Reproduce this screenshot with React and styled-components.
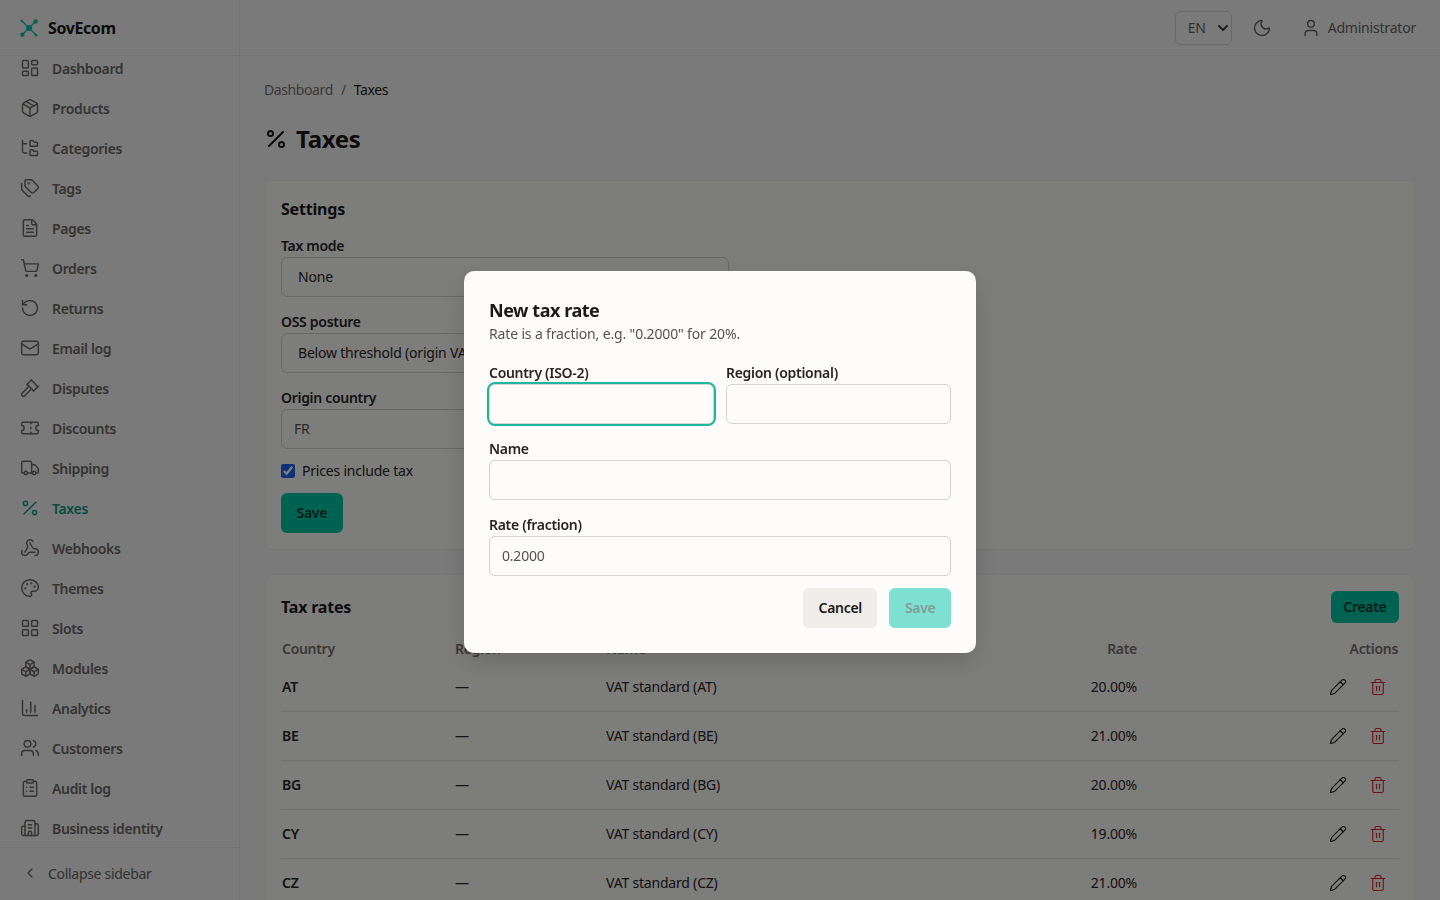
import styled, { createGlobalStyle } from "styled-components";
import {
  LayoutDashboard, Package, FolderTree, Tags, FileText, ShoppingCart, RotateCcw, Mail, Gavel,
  Ticket, Truck, Percent, Webhook, Palette, LayoutGrid, Boxes, ChartColumn, Users, ClipboardList,
  Building2, ChevronLeft, ChevronDown, Moon, User, Pencil, Trash2,
} from "lucide-react";

const GlobalStyle = createGlobalStyle`
  html, body { margin: 0; height: 100%; overflow: hidden; }
  body {
    background: #f5f5f4;
    color: #1c1917;
    font-family: "Noto Sans", "Liberation Sans", sans-serif;
    font-size: 14px;
    letter-spacing: -0.2px;
  }
  * { box-sizing: border-box; }
`;

const Shell = styled.div`
  display: flex;
  height: 900px;
  overflow: hidden;
`;

const Sidebar = styled.aside`
  width: 240px;
  flex-shrink: 0;
  display: flex;
  flex-direction: column;
  background: #f5f5f4;
  border-right: 1px solid #ebe9e7;
`;

const Brand = styled.div`
  height: 56px;
  flex-shrink: 0;
  display: flex;
  align-items: center;
  gap: 9px;
  padding: 0 19px;
  border-bottom: 1px solid #e7e5e4;
  font-size: 16px;
  font-weight: 700;
  letter-spacing: -0.4px;
  color: #1c1917;
`;

const Nav = styled.nav`
  flex: 1;
  overflow: hidden;
`;

const NavList = styled.div`
  margin-top: -8px;
`;

const NavItem = styled.a`
  height: 40px;
  display: flex;
  align-items: center;
  gap: 12px;
  padding: 0 20px;
  font-weight: 600;
  letter-spacing: -0.35px;
  color: ${(p) => (p.$active ? "#0d9c80" : "#6b6866")};
`;

const Collapse = styled.div`
  height: 53px;
  flex-shrink: 0;
  display: flex;
  align-items: center;
  gap: 10px;
  padding: 0 22px 2px;
  border-top: 1px solid #e7e5e4;
  color: #676462;
  letter-spacing: -0.3px;
`;

const Content = styled.div`
  flex: 1;
  min-width: 0;
  display: flex;
  flex-direction: column;
`;

const Topbar = styled.header`
  height: 56px;
  flex-shrink: 0;
  display: flex;
  align-items: center;
  justify-content: flex-end;
  padding: 0 24px;
  border-bottom: 1px solid #e7e5e4;
`;

const LangWrap = styled.div`
  position: relative;
  margin-right: 20px;
  svg { position: absolute; right: 1px; top: 9px; pointer-events: none; color: #44403c; }
`;

const LangSelect = styled.select`
  appearance: none;
  width: 57px;
  height: 34px;
  padding: 0 0 0 12px;
  border: 1px solid #d6d3d1;
  border-radius: 6px;
  background: #f5f5f4;
  color: #676462;
  font: inherit;
  letter-spacing: inherit;
`;

const ThemeToggle = styled.button`
  width: 20px;
  height: 20px;
  padding: 0;
  margin-right: 29px;
  border: 0;
  background: none;
  color: #676462;
`;

const UserBox = styled.div`
  display: flex;
  align-items: center;
  gap: 7px;
  color: #676462;
`;

const Main = styled.main`
  flex: 1;
  overflow: hidden;
  padding: 24px 25px 0 24px;
`;

const Breadcrumb = styled.div`
  display: flex;
  gap: 8px;
  height: 20px;
  line-height: 20px;
  letter-spacing: -0.4px;
  color: #78716c;
  span:last-child { color: #1c1917; }
`;

const Title = styled.h1`
  display: flex;
  align-items: center;
  gap: 8px;
  margin: 19px 0 23px;
  height: 38px;
  font-size: 24px;
  font-weight: 700;
  letter-spacing: -0.3px;
  svg { margin-top: 2px; }
`;

const Card = styled.section`
  margin: 0 0 24px 1px;
  padding: 16px 15px;
  background: #fafaf9;
  border: 1px solid #eeedeb;
  border-radius: 6px;
`;

const CardTitle = styled.h2`
  margin: 0;
  font-size: 16px;
  line-height: 24px;
  font-weight: 700;
`;

const Stack = styled.div`
  width: 448px;
  margin-top: 15px;
  display: flex;
  flex-direction: column;
  gap: 15px;
`;

const Field = styled.label`
  display: flex;
  flex-direction: column;
  min-width: 0;
  flex: 1;
`;

const Label = styled.span`
  height: 20px;
  line-height: 20px;
  margin-bottom: 1px;
  font-weight: 600;
  letter-spacing: -0.3px;
  color: #292524;
`;

const Select = styled.select`
  appearance: none;
  height: 40px;
  padding: 0 16px 2px;
  border: 1px solid #d6d3d1;
  border-radius: 6px;
  background: #fafaf9;
  color: #292524;
  font: inherit;
  letter-spacing: inherit;
`;

const Input = styled.input`
  width: 100%;
  height: 40px;
  padding: 0 12px 2px;
  border: 1px solid #d6d3d1;
  border-radius: 6px;
  background: ${(p) => p.$bg || "#fafaf9"};
  color: #57534e;
  font: inherit;
  letter-spacing: inherit;
  ${(p) => p.$focused && "outline: 2px solid #1fb5a0; outline-offset: 0;"}
`;

const CheckRow = styled.label`
  display: flex;
  align-items: center;
  gap: 7px;
  margin-top: -3px;
  height: 20px;
  padding-bottom: 1px;
  color: #292524;
`;

const Check = styled.input`
  width: 14px;
  height: 14px;
  margin: 0;
  accent-color: #2563eb;
`;

const Button = styled.button`
  height: ${(p) => (p.$small ? "32px" : "40px")};
  padding: 0 ${(p) => (p.$small ? "12.5px" : "15.5px")} 2px;
  border: 0;
  border-radius: 6px;
  background: ${(p) => (p.$secondary ? "#efedea" : "#01c4a2")};
  color: ${(p) => (p.$secondary ? "#1c1917" : "#083c36")};
  font: inherit;
  font-weight: 600;
  letter-spacing: -0.3px;
  opacity: ${(p) => (p.$disabled ? 0.5 : 1)};
`;

const FormSave = styled(Button)`
  align-self: flex-start;
  margin-top: -3px;
`;

const TableHead = styled.div`
  display: flex;
  align-items: center;
  justify-content: space-between;
  height: 32px;
`;

const Table = styled.table`
  width: 100%;
  margin-top: 11px;
  border-collapse: collapse;
  table-layout: fixed;
`;

const Th = styled.th`
  height: 28px;
  padding: 0 1px;
  text-align: ${(p) => p.$align || "left"};
  font-weight: 600;
  letter-spacing: -0.3px;
  color: #78716c;
`;

const Td = styled.td`
  height: 49px;
  padding: 0 1px;
  border-bottom: 1px solid #e7e5e4;
  text-align: ${(p) => p.$align || "left"};
  font-weight: ${(p) => (p.$strong ? 600 : 400)};
  color: #292524;
`;

const Actions = styled.div`
  display: flex;
  align-items: center;
  justify-content: flex-end;
  gap: 22px;
  padding: 1px 11px 0 0;
`;

const IconBtn = styled.button`
  display: flex;
  width: 18px;
  height: 18px;
  padding: 0;
  border: 0;
  background: none;
  color: ${(p) => (p.$danger ? "#dc2626" : "#1c1917")};
`;

const Overlay = styled.div`
  position: fixed;
  inset: 0;
  display: flex;
  justify-content: center;
  align-items: flex-start;
  padding-top: 271px;
  background: rgba(0, 0, 0, 0.5);
`;

const Dialog = styled.div`
  width: 512px;
  padding: 25px;
  background: #fdfcfb;
  border-radius: 10px;
  box-shadow: 0 10px 25px rgba(0, 0, 0, 0.15);
`;

const DialogTitle = styled.h3`
  margin: 0;
  font-size: 18px;
  line-height: 28px;
  font-weight: 700;
  letter-spacing: -0.45px;
  color: #1c1917;
`;

const DialogText = styled.p`
  margin: 0 0 19px;
  height: 20px;
  line-height: 20px;
  letter-spacing: -0.15px;
  color: #57534e;
`;

const DialogForm = styled.div`
  display: flex;
  flex-direction: column;
  gap: 15px;
`;

const FieldRow = styled.div`
  display: flex;
  gap: 12px;
`;

const DialogFooter = styled.div`
  display: flex;
  justify-content: flex-end;
  gap: 12px;
  margin-top: -3px;
`;

const LogoMark = () => (
  <svg width="20" height="20" viewBox="0 0 20 20" fill="none" stroke="#14c4a6" strokeWidth="1.3">
    <path d="M2 2 18 18M18 2 2 18" />
    <circle cx="10" cy="10" r="3" fill="#01c4a2" stroke="none" />
    <circle cx="16.6" cy="3.4" r="2.2" fill="#01c4a2" stroke="none" />
    <circle cx="3.4" cy="16.6" r="2.2" fill="#01c4a2" stroke="none" />
    <circle cx="3" cy="3" r="1.5" fill="#01c4a2" stroke="none" opacity="0.7" />
    <circle cx="17" cy="17" r="1.5" fill="#01c4a2" stroke="none" opacity="0.7" />
  </svg>
);

const navItems = [
  ["Dashboard", LayoutDashboard], ["Products", Package], ["Categories", FolderTree], ["Tags", Tags],
  ["Pages", FileText], ["Orders", ShoppingCart], ["Returns", RotateCcw], ["Email log", Mail],
  ["Disputes", Gavel], ["Discounts", Ticket], ["Shipping", Truck], ["Taxes", Percent],
  ["Webhooks", Webhook], ["Themes", Palette], ["Slots", LayoutGrid], ["Modules", Boxes],
  ["Analytics", ChartColumn], ["Customers", Users], ["Audit log", ClipboardList], ["Business identity", Building2],
];

const rates = [
  ["AT", "20.00%"], ["BE", "21.00%"], ["BG", "20.00%"], ["CY", "19.00%"], ["CZ", "21.00%"],
];

export default function App() {
  return (
    <>
      <GlobalStyle />
      <Shell>
        <Sidebar>
          <Brand><LogoMark />SovEcom</Brand>
          <Nav>
            <NavList>
              {navItems.map(([label, Icon]) => (
                <NavItem key={label} $active={label === "Taxes"}>
                  <Icon size={20} strokeWidth={1.75} />
                  {label}
                </NavItem>
              ))}
            </NavList>
          </Nav>
          <Collapse><ChevronLeft size={16} strokeWidth={1.75} />Collapse sidebar</Collapse>
        </Sidebar>
        <Content>
          <Topbar>
            <LangWrap>
              <LangSelect defaultValue="EN"><option>EN</option></LangSelect>
              <ChevronDown size={16} strokeWidth={3} />
            </LangWrap>
            <ThemeToggle><Moon size={20} strokeWidth={1.75} /></ThemeToggle>
            <UserBox><User size={20} strokeWidth={1.75} />Administrator</UserBox>
          </Topbar>
          <Main>
            <Breadcrumb><span>Dashboard</span><span>/</span><span>Taxes</span></Breadcrumb>
            <Title><Percent size={24} strokeWidth={2} />Taxes</Title>
            <Card>
              <CardTitle>Settings</CardTitle>
              <Stack>
                <Field>
                  <Label>Tax mode</Label>
                  <Select defaultValue="None"><option>None</option></Select>
                </Field>
                <Field>
                  <Label>OSS posture</Label>
                  <Select defaultValue="b"><option value="b">Below threshold (origin VAT)</option></Select>
                </Field>
                <Field>
                  <Label>Origin country</Label>
                  <Input readOnly value="FR" />
                </Field>
                <CheckRow><Check type="checkbox" readOnly checked />Prices include tax</CheckRow>
                <FormSave>Save</FormSave>
              </Stack>
            </Card>
            <Card>
              <TableHead>
                <CardTitle>Tax rates</CardTitle>
                <Button $small>Create</Button>
              </TableHead>
              <Table>
                <colgroup>
                  <col style={{ width: 173 }} />
                  <col style={{ width: 151 }} />
                  <col />
                  <col style={{ width: 200 }} />
                  <col style={{ width: 261 }} />
                </colgroup>
                <thead>
                  <tr>
                    <Th>Country</Th><Th>Region</Th><Th>Name</Th>
                    <Th $align="right">Rate</Th><Th $align="right">Actions</Th>
                  </tr>
                </thead>
                <tbody>
                  {rates.map(([code, rate]) => (
                    <tr key={code}>
                      <Td $strong>{code}</Td>
                      <Td>—</Td>
                      <Td>VAT standard ({code})</Td>
                      <Td $align="right">{rate}</Td>
                      <Td>
                        <Actions>
                          <IconBtn><Pencil size={18} strokeWidth={1.5} /></IconBtn>
                          <IconBtn $danger><Trash2 size={18} strokeWidth={1.5} /></IconBtn>
                        </Actions>
                      </Td>
                    </tr>
                  ))}
                </tbody>
              </Table>
            </Card>
          </Main>
        </Content>
      </Shell>
      <Overlay>
        <Dialog>
          <DialogTitle>New tax rate</DialogTitle>
          <DialogText>Rate is a fraction, e.g. "0.2000" for 20%.</DialogText>
          <DialogForm>
            <FieldRow>
              <Field><Label>Country (ISO-2)</Label><Input $focused $bg="#fdfcfb" /></Field>
              <Field><Label>Region (optional)</Label><Input $bg="#fdfcfb" /></Field>
            </FieldRow>
            <Field><Label>Name</Label><Input $bg="#fdfcfb" /></Field>
            <Field><Label>Rate (fraction)</Label><Input $bg="#fdfcfb" readOnly value="0.2000" /></Field>
            <DialogFooter>
              <Button $secondary>Cancel</Button>
              <Button $disabled>Save</Button>
            </DialogFooter>
          </DialogForm>
        </Dialog>
      </Overlay>
    </>
  );
}
